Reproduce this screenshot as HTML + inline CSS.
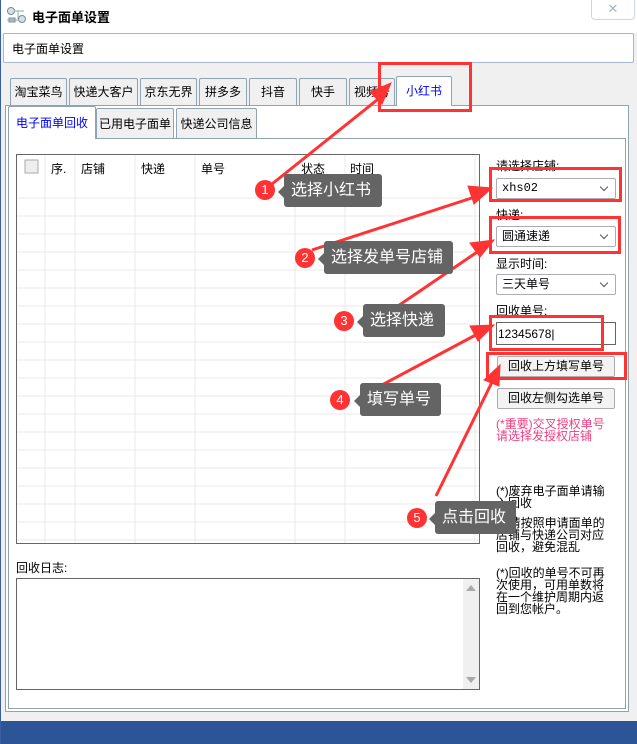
<!DOCTYPE html>
<html><head><meta charset="utf-8"><style>
*{margin:0;padding:0;box-sizing:border-box}
body{width:637px;height:744px;position:relative;overflow:hidden;background:#f0f0f0;font-family:"Liberation Sans","Noto Sans CJK SC",sans-serif;font-size:12px;color:#000}
.a{position:absolute}
.tab{position:absolute;background:#f0f0f0;border:1px solid #8fa3b0;border-bottom:none;border-radius:2px 2px 0 0;text-align:center;font-size:12px}
.sel{height:21px;border:1px solid #abadb3;background:#fff;border-radius:2px;padding-left:5px;line-height:19px}
.sel:after{content:"";position:absolute;right:8px;top:5px;width:5px;height:5px;border-right:1px solid #555;border-bottom:1px solid #555;transform:rotate(45deg)}
.btn{height:21px;border:1px solid #adadad;background:#f3f3f3;text-align:center;line-height:19px;border-radius:2px}
.bub{position:absolute;background:#646464;color:#fff;font-size:16px;border-radius:3px;padding-left:7px;line-height:33px;height:33px}
.bub:before{content:"";position:absolute;left:-6px;top:12px;border:6px solid transparent;border-left:none;border-right-color:#646464}
.num{position:absolute;width:20px;height:20px;border-radius:50%;background:#f33;color:#fff;text-align:center;line-height:20px;font-size:13px}
.rb{position:absolute;border:3px solid #f33}
.note{position:absolute;left:496px;width:118px;line-height:12px;font-size:12px;word-break:break-all}
</style></head><body>
<div class="a" style="left:0;top:0;width:637px;height:33px;background:#fff"></div>
<div class="a" style="left:0;top:0;width:1px;height:744px;background:#3a5f9f"></div>
<svg class="a" style="left:6px;top:6px" width="22" height="18"><circle cx="5" cy="5" r="3.5" fill="#d8dfe6" stroke="#7a8a99"/><circle cx="16" cy="13" r="3.5" fill="#d8dfe6" stroke="#7a8a99"/><rect x="3" y="12" width="6" height="4" fill="#bcc" stroke="#7a8a99"/><path d="M8 5H18M12 5V13M1 14H12" stroke="#8aa" fill="none"/></svg>
<div class="a" style="left:32px;top:7px;font-weight:bold;font-size:13px">电子面单设置</div>
<div class="a" style="left:591px;top:0;width:44px;height:20px;border:1px solid #c8d6e6;border-top:none;border-radius:0 0 4px 4px;background:#fff;text-align:center;color:#a8b4c2;font-size:13px;line-height:18px">✕</div>
<div class="a" style="left:3px;top:33px;width:631px;height:30px;border:1px solid #a8b4d8;background:#fff;border-radius:2px;padding:6px 0 0 8px">电子面单设置</div>
<div class="tab" style="left:10px;top:78px;width:57px;height:27px;line-height:27px">淘宝菜鸟</div>
<div class="tab" style="left:69px;top:78px;width:69px;height:27px;line-height:27px">快递大客户</div>
<div class="tab" style="left:140px;top:78px;width:57px;height:27px;line-height:27px">京东无界</div>
<div class="tab" style="left:199px;top:78px;width:48px;height:27px;line-height:27px">拼多多</div>
<div class="tab" style="left:249px;top:78px;width:48px;height:27px;line-height:27px">抖音</div>
<div class="tab" style="left:299px;top:78px;width:48px;height:27px;line-height:27px">快手</div>
<div class="tab" style="left:349px;top:78px;width:46px;height:27px;line-height:27px">视频号</div>
<div class="a" style="left:5px;top:105px;width:624px;height:607px;border:1px solid #8fa3b0;background:#fff"></div>
<div class="tab" style="left:396px;top:76px;width:56px;height:30px;line-height:28px;background:#fff;color:#00f;z-index:2">小红书</div>
<div class="tab" style="left:96px;top:108px;width:78px;height:31px;line-height:30px">已用电子面单</div>
<div class="tab" style="left:176px;top:108px;width:81px;height:31px;line-height:30px">快递公司信息</div>
<div class="a" style="left:8px;top:138px;width:618px;height:571px;border:1px solid #8fa3b0;background:#fff"></div>
<div class="tab" style="left:8px;top:106px;width:88px;height:33px;line-height:32px;background:#fff;color:#00f;z-index:2">电子面单回收</div>
<svg class="a" style="left:16px;top:154px" width="465" height="391">
<rect x="0.5" y="0.5" width="463" height="389" fill="#fff" stroke="#666"/>
<g stroke="#e8e8e8">
<path d="M1 44H463M1 62H463M1 80H463M1 98H463M1 116H463M1 134H463M1 152H463M1 170H463M1 188H463M1 206H463M1 224H463M1 242H463M1 260H463M1 278H463M1 296H463M1 314H463M1 332H463M1 350H463M1 368H463M1 386H463"/>
<path d="M29 1V389M59 1V389M119 1V389M179 1V389M279 1V389M329 1V389M459 1V389"/>
</g>
<rect x="9" y="6" width="13" height="13" fill="#eee" stroke="#aaa"/>
</svg>
<div class="a" style="left:51px;top:160px">序.</div>
<div class="a" style="left:81px;top:160px">店铺</div>
<div class="a" style="left:141px;top:160px">快递</div>
<div class="a" style="left:201px;top:160px">单号</div>
<div class="a" style="left:301px;top:160px">状态</div>
<div class="a" style="left:350px;top:160px">时间</div>
<div class="a" style="left:16px;top:559px">回收日志:</div>
<div class="a" style="left:16px;top:578px;width:464px;height:112px;border:1px solid #666;background:#fff"><div class="a" style="right:0;top:0;width:16px;height:110px;background:#f0f0f0"></div><div class="a" style="right:3px;top:6px;border:5px solid transparent;border-bottom:6px solid #aaa;border-top:none"></div><div class="a" style="right:3px;bottom:6px;border:5px solid transparent;border-top:6px solid #aaa;border-bottom:none"></div></div>
<div class="a" style="left:496px;top:157px">请选择店铺:</div>
<div class="a sel" style="left:496px;top:178px;width:120px;font-family:'Liberation Mono',monospace">xhs02</div>
<div class="a" style="left:496px;top:206px">快递:</div>
<div class="a sel" style="left:496px;top:226px;width:120px">圆通速递</div>
<div class="a" style="left:496px;top:255px">显示时间:</div>
<div class="a sel" style="left:496px;top:274px;width:120px">三天单号</div>
<div class="a" style="left:496px;top:302px">回收单号:</div>
<div class="a" style="left:496px;top:322px;width:120px;height:23px;border:1px solid #666;background:#fff;padding:4px 0 0 1px">12345678|</div>
<div class="a btn" style="left:497px;top:356px;width:118px">回收上方填写单号</div>
<div class="a btn" style="left:497px;top:388px;width:118px">回收左侧勾选单号</div>
<div class="note" style="top:418px;color:#f04080;width:130px">(*重要)交叉授权单号<br>请选择发授权店铺</div>
<div class="note" style="top:485px">(*)废弃电子面单请输入回收</div>
<div class="note" style="top:517px">(*)请按照申请面单的店铺与快递公司对应回收，避免混乱</div>
<div class="note" style="top:567px">(*)回收的单号不可再次使用，可用单数将在一个维护周期内返回到您帐户。</div>
<div class="a" style="left:1px;top:721px;width:636px;height:23px;background:#2c5597"></div>
<div class="rb" style="left:378px;top:62px;width:94px;height:50px"></div>
<div class="rb" style="left:489px;top:167px;width:133px;height:35px"></div>
<div class="rb" style="left:489px;top:216px;width:132px;height:38px"></div>
<div class="rb" style="left:489px;top:315px;width:115px;height:36px"></div>
<div class="rb" style="left:486px;top:352px;width:141px;height:28px"></div>
<svg class="a" style="left:0;top:0" width="637" height="744">
<g fill="#f33" stroke="#f33">
<path d="M272 184L382 96" stroke-width="3"/><polygon points="391,83 370,92 382,104"/>
<path d="M312 250L484 194" stroke-width="3"/><polygon points="492,188 468,186 474,204"/>
<path d="M395 308L486 246" stroke-width="3"/><polygon points="494,240 470,243 480,257"/>
<path d="M380 386L485 330" stroke-width="3"/><polygon points="494,325 470,326 478,341"/>
<path d="M436 496L496 374" stroke-width="3"/><polygon points="500,365 484,380 499,386"/>
</g></svg>
<div class="num" style="left:255px;top:180px">1</div><div class="bub" style="left:284px;top:174px;width:98px">选择小红书</div>
<div class="num" style="left:295px;top:248px">2</div><div class="bub" style="left:324px;top:241px;width:129px">选择发单号店铺</div>
<div class="num" style="left:334px;top:311px">3</div><div class="bub" style="left:363px;top:304px;width:82px">选择快递</div>
<div class="num" style="left:330px;top:390px">4</div><div class="bub" style="left:360px;top:383px;width:81px">填写单号</div>
<div class="num" style="left:407px;top:508px">5</div><div class="bub" style="left:435px;top:501px;width:81px">点击回收</div>
</body></html>
